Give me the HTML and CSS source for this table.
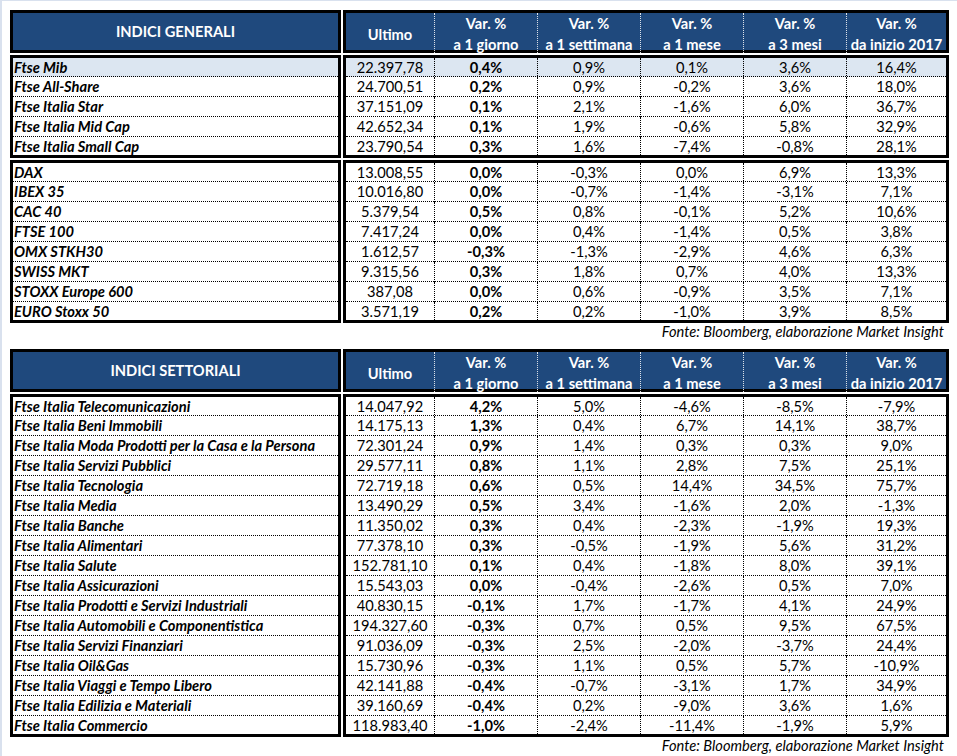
FILE: index.html
```html
<!DOCTYPE html>
<html lang="it">
<head>
<meta charset="utf-8">
<title>Indici</title>
<link rel="stylesheet" href="styles.css">
</head>
<body>
<div class="page">

  <section class="table">
    <div class="bands">
      <div class="band">
        <div class="lbox head"><div class="htitle">INDICI GENERALI</div></div>
        <div class="rbox head">
          <div class="hcell">Ultimo</div>
          <div class="hcell">Var. %<br>a 1 giorno</div>
          <div class="hcell">Var. %<br>a 1 settimana</div>
          <div class="hcell">Var. %<br>a 1 mese</div>
          <div class="hcell">Var. %<br>a 3 mesi</div>
          <div class="hcell">Var. %<br>da inizio 2017</div>
        </div>
      </div>

      <div class="band">
        <div class="lbox body">
          <div class="row hl">Ftse Mib</div>
          <div class="row">Ftse All-Share</div>
          <div class="row">Ftse Italia Star</div>
          <div class="row">Ftse Italia Mid Cap</div>
          <div class="row">Ftse Italia Small Cap</div>
        </div>
        <div class="rbox body">
          <div class="row hl"><span>22.397,78</span><b>0,4%</b><span>0,9%</span><span>0,1%</span><span>3,6%</span><span>16,4%</span></div>
          <div class="row"><span>24.700,51</span><b>0,2%</b><span>0,9%</span><span>-0,2%</span><span>3,6%</span><span>18,0%</span></div>
          <div class="row"><span>37.151,09</span><b>0,1%</b><span>2,1%</span><span>-1,6%</span><span>6,0%</span><span>36,7%</span></div>
          <div class="row"><span>42.652,34</span><b>0,1%</b><span>1,9%</span><span>-0,6%</span><span>5,8%</span><span>32,9%</span></div>
          <div class="row"><span>23.790,54</span><b>0,3%</b><span>1,6%</span><span>-7,4%</span><span>-0,8%</span><span>28,1%</span></div>
        </div>
      </div>

      <div class="band">
        <div class="lbox body">
          <div class="row">DAX</div>
          <div class="row">IBEX 35</div>
          <div class="row">CAC 40</div>
          <div class="row">FTSE 100</div>
          <div class="row">OMX STKH30</div>
          <div class="row">SWISS MKT</div>
          <div class="row">STOXX Europe 600</div>
          <div class="row">EURO Stoxx 50</div>
        </div>
        <div class="rbox body">
          <div class="row"><span>13.008,55</span><b>0,0%</b><span>-0,3%</span><span>0,0%</span><span>6,9%</span><span>13,3%</span></div>
          <div class="row"><span>10.016,80</span><b>0,0%</b><span>-0,7%</span><span>-1,4%</span><span>-3,1%</span><span>7,1%</span></div>
          <div class="row"><span>5.379,54</span><b>0,5%</b><span>0,8%</span><span>-0,1%</span><span>5,2%</span><span>10,6%</span></div>
          <div class="row"><span>7.417,24</span><b>0,0%</b><span>0,4%</span><span>-1,4%</span><span>0,5%</span><span>3,8%</span></div>
          <div class="row"><span>1.612,57</span><b>-0,3%</b><span>-1,3%</span><span>-2,9%</span><span>4,6%</span><span>6,3%</span></div>
          <div class="row"><span>9.315,56</span><b>0,3%</b><span>1,8%</span><span>0,7%</span><span>4,0%</span><span>13,3%</span></div>
          <div class="row"><span>387,08</span><b>0,0%</b><span>0,6%</span><span>-0,9%</span><span>3,5%</span><span>7,1%</span></div>
          <div class="row"><span>3.571,19</span><b>0,2%</b><span>0,2%</span><span>-1,0%</span><span>3,9%</span><span>8,5%</span></div>
        </div>
      </div>
    </div>
    <p class="source">Fonte: Bloomberg, elaborazione Market Insight</p>
  </section>

  <section class="table">
    <div class="bands">
      <div class="band">
        <div class="lbox head"><div class="htitle">INDICI SETTORIALI</div></div>
        <div class="rbox head">
          <div class="hcell">Ultimo</div>
          <div class="hcell">Var. %<br>a 1 giorno</div>
          <div class="hcell">Var. %<br>a 1 settimana</div>
          <div class="hcell">Var. %<br>a 1 mese</div>
          <div class="hcell">Var. %<br>a 3 mesi</div>
          <div class="hcell">Var. %<br>da inizio 2017</div>
        </div>
      </div>

      <div class="band">
        <div class="lbox body">
          <div class="row">Ftse Italia Telecomunicazioni</div>
          <div class="row">Ftse Italia Beni Immobili</div>
          <div class="row">Ftse Italia Moda Prodotti per la Casa e la Persona</div>
          <div class="row">Ftse Italia Servizi Pubblici</div>
          <div class="row">Ftse Italia Tecnologia</div>
          <div class="row">Ftse Italia Media</div>
          <div class="row">Ftse Italia Banche</div>
          <div class="row">Ftse Italia Alimentari</div>
          <div class="row">Ftse Italia Salute</div>
          <div class="row">Ftse Italia Assicurazioni</div>
          <div class="row">Ftse Italia Prodotti e Servizi Industriali</div>
          <div class="row">Ftse Italia Automobili e Componentistica</div>
          <div class="row">Ftse Italia Servizi Finanziari</div>
          <div class="row">Ftse Italia Oil&amp;Gas</div>
          <div class="row">Ftse Italia Viaggi e Tempo Libero</div>
          <div class="row">Ftse Italia Edilizia e Materiali</div>
          <div class="row">Ftse Italia Commercio</div>
        </div>
        <div class="rbox body">
          <div class="row"><span>14.047,92</span><b>4,2%</b><span>5,0%</span><span>-4,6%</span><span>-8,5%</span><span>-7,9%</span></div>
          <div class="row"><span>14.175,13</span><b>1,3%</b><span>0,4%</span><span>6,7%</span><span>14,1%</span><span>38,7%</span></div>
          <div class="row"><span>72.301,24</span><b>0,9%</b><span>1,4%</span><span>0,3%</span><span>0,3%</span><span>9,0%</span></div>
          <div class="row"><span>29.577,11</span><b>0,8%</b><span>1,1%</span><span>2,8%</span><span>7,5%</span><span>25,1%</span></div>
          <div class="row"><span>72.719,18</span><b>0,6%</b><span>0,5%</span><span>14,4%</span><span>34,5%</span><span>75,7%</span></div>
          <div class="row"><span>13.490,29</span><b>0,5%</b><span>3,4%</span><span>-1,6%</span><span>2,0%</span><span>-1,3%</span></div>
          <div class="row"><span>11.350,02</span><b>0,3%</b><span>0,4%</span><span>-2,3%</span><span>-1,9%</span><span>19,3%</span></div>
          <div class="row"><span>77.378,10</span><b>0,3%</b><span>-0,5%</span><span>-1,9%</span><span>5,6%</span><span>31,2%</span></div>
          <div class="row"><span>152.781,10</span><b>0,1%</b><span>0,4%</span><span>-1,8%</span><span>8,0%</span><span>39,1%</span></div>
          <div class="row"><span>15.543,03</span><b>0,0%</b><span>-0,4%</span><span>-2,6%</span><span>0,5%</span><span>7,0%</span></div>
          <div class="row"><span>40.830,15</span><b>-0,1%</b><span>1,7%</span><span>-1,7%</span><span>4,1%</span><span>24,9%</span></div>
          <div class="row"><span>194.327,60</span><b>-0,3%</b><span>0,7%</span><span>0,5%</span><span>9,5%</span><span>67,5%</span></div>
          <div class="row"><span>91.036,09</span><b>-0,3%</b><span>2,5%</span><span>-2,0%</span><span>-3,7%</span><span>24,4%</span></div>
          <div class="row"><span>15.730,96</span><b>-0,3%</b><span>1,1%</span><span>0,5%</span><span>5,7%</span><span>-10,9%</span></div>
          <div class="row"><span>42.141,88</span><b>-0,4%</b><span>-0,7%</span><span>-3,1%</span><span>1,7%</span><span>34,9%</span></div>
          <div class="row"><span>39.160,69</span><b>-0,4%</b><span>0,2%</span><span>-9,0%</span><span>3,6%</span><span>1,6%</span></div>
          <div class="row"><span>118.983,40</span><b>-1,0%</b><span>-2,4%</span><span>-11,4%</span><span>-1,9%</span><span>5,9%</span></div>
        </div>
      </div>
    </div>
    <p class="source">Fonte: Bloomberg, elaborazione Market Insight</p>
  </section>

</div>
</body>
</html>
```

FILE: styles.css
```css
html, body {
  margin: 0;
  padding: 0;
}

body {
  background: #ffffff;
  border-top: 1px solid #d9e1ee;
  border-left: 2px solid #d9e1ee;
  height: 756px;
  overflow: hidden;
  box-sizing: border-box;
  font-family: Lato, "Open Sans", sans-serif;
  font-size: 14.67px;
  color: #000;
}

.page {
  padding: 9px 0 0 8px;
}

.table + .table {
  margin-top: 8px;
}

.bands {
  display: flex;
  flex-direction: column;
  gap: 2px;
}

.band {
  display: flex;
  gap: 2px;
}

.lbox,
.rbox {
  border: 3px solid #000;
  box-sizing: border-box;
}

.lbox {
  width: 331px;
}

.rbox {
  width: 606px;
}

.head {
  height: 43px;
  background: #1f497d;
  color: #fff;
  font-weight: 700;
}

.lbox.head {
  display: flex;
  align-items: center;
  justify-content: center;
}

.rbox.head {
  display: grid;
  grid-template-columns: 88px 103px 103px 103px 103px 100px;
}

.hcell {
  display: flex;
  align-items: center;
  justify-content: center;
  text-align: center;
  line-height: 21px;
  white-space: nowrap;
}

.hcell + .hcell {
  border-left: 1px dotted rgba(255, 255, 255, 0.85);
}

.row {
  height: 20px;
  box-sizing: border-box;
  border-bottom: 1px dotted #000;
  line-height: 20px;
  white-space: nowrap;
}

.row:first-child {
  height: 19px;
}

.row:last-child {
  height: 18px;
  border-bottom: none;
}

.row.hl {
  background: #dce6f1;
}

.lbox .row {
  padding-left: 1px;
  font-weight: 700;
  font-style: italic;
}

.rbox .row {
  display: grid;
  grid-template-columns: 88px 103px 103px 103px 103px 100px;
}

.rbox .row > * {
  text-align: center;
  font-weight: 400;
}

.rbox .row > b {
  font-weight: 700;
}

.rbox .row > * + * {
  border-left: 1px dotted #000;
}

.source {
  margin: 0;
  width: 939px;
  height: 18px;
  line-height: 18px;
  text-align: right;
  font-style: italic;
  padding-right: 5px;
  box-sizing: border-box;
}
```
